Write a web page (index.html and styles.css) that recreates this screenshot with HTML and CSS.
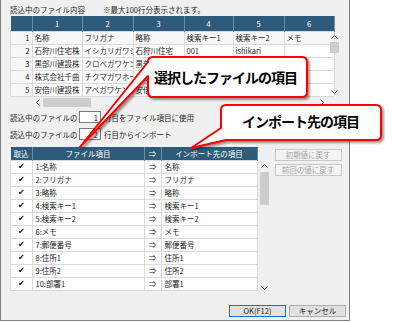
FILE: index.html
```html
<!DOCTYPE html>
<html lang="ja">
<head>
  <meta charset="UTF-8" />
  <title>ファイル取込設定</title>
  <link rel="stylesheet" href="styles.css">
</head>
<body>
<div class="dialog">
  <div class="caption-row">
    <span class="caption">読込中のファイル内容</span>
    <span>※最大100行分表示されます。</span>
  </div>

  <div class="preview">
    <div class="sheet">
      <table class="grid preview-grid">
        <thead>
          <tr>
            <th class="w21"></th><th class="w49">1</th><th class="w50">2</th><th class="w50">3</th>
            <th class="w48">4</th><th class="w50">5</th><th class="w49">6</th>
          </tr>
        </thead>
        <tbody>
          <tr class="first"><td class="no">1</td><td>名称</td><td>フリガナ</td><td>略称</td><td>検索キー1</td><td>検索キー2</td><td>メモ</td></tr>
          <tr><td class="no">2</td><td>石狩川住宅株</td><td>イシカリガワジュ</td><td>石狩川住宅</td><td>001</td><td>ishikari</td><td></td></tr>
          <tr><td class="no">3</td><td>黒部川建設株</td><td>クロベガワケンセ</td><td>黒部川建設</td><td>002</td><td>kurobe</td><td></td></tr>
          <tr><td class="no">4</td><td>株式会社千曲</td><td>チクマガワホーム</td><td>千曲川ホーム</td><td>003</td><td>chikuma</td><td></td></tr>
          <tr><td class="no">5</td><td>安倍川建設株</td><td>アベガワケンセツ</td><td>安倍川建設</td><td>004</td><td>abe</td><td></td></tr>
        </tbody>
      </table>
      <div class="hscroll">
        <span class="arrow"><svg width="4" height="7" viewBox="0 0 4 7"><path d="M3.5 0.5 L0.5 3.5 L3.5 6.5" fill="none" stroke="#444"/></svg></span>
        <span class="thumb-h"></span>
        <span class="track"></span>
        <span class="arrow"><svg width="4" height="7" viewBox="0 0 4 7"><path d="M0.5 0.5 L3.5 3.5 L0.5 6.5" fill="none" stroke="#444"/></svg></span>
      </div>
    </div>
    <div class="vscroll vscroll-top">
      <span class="arrow"><svg width="7" height="4" viewBox="0 0 7 4"><path d="M0.5 3.5 L3.5 0.5 L6.5 3.5" fill="none" stroke="#444"/></svg></span>
      <span class="thumb-v short"></span>
      <span class="track"></span>
      <span class="arrow"><svg width="7" height="4" viewBox="0 0 7 4"><path d="M0.5 0.5 L3.5 3.5 L6.5 0.5" fill="none" stroke="#444"/></svg></span>
    </div>
  </div>

  <div class="settings">
    <div class="setting">
      <span class="label">読込中のファイルの</span>
      <input class="num" type="text" value="1">
      <span class="after">行目をファイル項目に使用</span>
    </div>
    <div class="setting">
      <span class="label">読込中のファイルの</span>
      <input class="num" type="text" value="2">
      <span class="after">行目からインポート</span>
    </div>
  </div>

  <div class="mapping">
    <table class="grid mapping-grid">
      <thead>
        <tr><th class="w21">取込</th><th class="w111">ファイル項目</th><th class="w16">⇒</th><th class="w95">インポート先の項目</th></tr>
      </thead>
      <tbody>
        <tr><td class="check">✔</td><td>1:名称</td><td class="to">⇒</td><td>名称</td></tr>
        <tr><td class="check">✔</td><td>2:フリガナ</td><td class="to">⇒</td><td>フリガナ</td></tr>
        <tr><td class="check">✔</td><td>3:略称</td><td class="to">⇒</td><td>略称</td></tr>
        <tr><td class="check">✔</td><td>4:検索キー1</td><td class="to">⇒</td><td>検索キー1</td></tr>
        <tr><td class="check">✔</td><td>5:検索キー2</td><td class="to">⇒</td><td>検索キー2</td></tr>
        <tr><td class="check">✔</td><td>6:メモ</td><td class="to">⇒</td><td>メモ</td></tr>
        <tr><td class="check">✔</td><td>7:郵便番号</td><td class="to">⇒</td><td>郵便番号</td></tr>
        <tr><td class="check">✔</td><td>8:住所1</td><td class="to">⇒</td><td>住所1</td></tr>
        <tr><td class="check">✔</td><td>9:住所2</td><td class="to">⇒</td><td>住所2</td></tr>
        <tr><td class="check">✔</td><td>10:部署1</td><td class="to">⇒</td><td>部署1</td></tr>
      </tbody>
    </table>
    <div class="vscroll vscroll-low">
      <span class="arrow"><svg width="7" height="4" viewBox="0 0 7 4"><path d="M0.5 3.5 L3.5 0.5 L6.5 3.5" fill="none" stroke="#444"/></svg></span>
      <span class="thumb-v long"></span>
      <span class="track"></span>
      <span class="arrow"><svg width="7" height="4" viewBox="0 0 7 4"><path d="M0.5 0.5 L3.5 3.5 L6.5 0.5" fill="none" stroke="#444"/></svg></span>
    </div>
    <div class="side">
      <button class="side-button" disabled>初期値に戻す</button>
      <button class="side-button" disabled>前回の値に戻す</button>
    </div>
  </div>

  <div class="footer">
    <button class="dlg-button primary">OK(F12)</button>
    <button class="dlg-button">キャンセル</button>
  </div>
</div>

<svg class="callouts" width="393" height="322" viewBox="0 0 393 322">
  <path class="callout" d="M153 57 H302 Q307 57 307 62 V92 Q307 97 302 97 H153 Q148 97 148 92 V76 L80 147 L148 62 Q148 57 153 57 Z"/>
  <text class="callout-text" x="154" y="83">選択したファイルの項目</text>
  <path class="callout" d="M226 105 H376 Q381 105 381 110 V135 Q381 140 376 140 H226 L191 148 L221 128 V110 Q221 105 226 105 Z"/>
  <text class="callout-text" x="242" y="127">インポート先の項目</text>
</svg>
</body>
</html>
```

FILE: styles.css
```css
body {
  margin: 0;
  background: #fff;
  font-family: "Noto Sans CJK JP", sans-serif;
  font-size: 7.5px;
  color: #1e1e1e;
  position: relative;
}
.dialog {
  width: 350px;
  height: 321px;
  box-sizing: border-box;
  border: 1px solid #808080;
  border-top: 0;
  background: #f0f0f0;
  padding: 0 3px 0 9px;
  display: flex;
  flex-direction: column;
}
.caption-row {
  height: 16px;
  box-sizing: border-box;
  padding-top: 4px;
  line-height: 12px;
  display: flex;
  white-space: nowrap;
}
.caption {
  width: 93px;
}

/* grids */
.grid {
  border-collapse: collapse;
  table-layout: fixed;
}
.grid th {
  background: #2f5b7a;
  color: #fff;
  font-weight: normal;
  padding: 0;
  text-align: center;
  border-right: 1px solid #6d8ca4;
  line-height: 12px;
  white-space: nowrap;
  overflow: hidden;
}
.grid td {
  height: 12px;
  padding: 0 0 0 2px;
  border: 1px solid #dadada;
  background: #fff;
  white-space: nowrap;
  overflow: hidden;
  line-height: 12px;
}
.w16 { width: 16px; }
.w21 { width: 21px; }
.w48 { width: 48px; }
.w49 { width: 49px; }
.w50 { width: 50px; }
.w95 { width: 95px; }
.w111 { width: 111px; }

.preview {
  display: flex;
  height: 92px;
}
.sheet {
  width: 317px;
  display: flex;
  flex-direction: column;
}
.preview-grid {
  width: 317px;
}
.preview-grid th {
  height: 15px;
}
.preview-grid .first td {
  background: #f7f7f7;
}
.preview-grid td.no {
  text-align: right;
  padding: 0 2px 0 0;
  background: #f7f7f7;
}
.hscroll {
  height: 11px;
  margin-top: auto;
  padding-left: 23px;
  display: flex;
  align-items: center;
}
.hscroll .arrow {
  width: 10px;
  display: flex;
  justify-content: center;
}
.thumb-h {
  width: 48px;
  height: 9px;
  background: #cdcdcd;
}
.track {
  flex: 1;
}
.vscroll {
  display: flex;
  flex-direction: column;
  align-items: center;
}
.vscroll .arrow {
  height: 11px;
  display: flex;
  align-items: center;
}
.thumb-v {
  width: 9px;
  background: #cdcdcd;
}
.thumb-v.short { height: 11px; }
.thumb-v.long { height: 33px; }
.vscroll-top {
  width: 14px;
  margin-top: 15px;
  height: 66px;
}

/* settings */
.settings {
  margin-top: 3px;
  display: flex;
  flex-direction: column;
  gap: 5px;
}
.setting {
  height: 12px;
  display: flex;
  align-items: center;
  white-space: nowrap;
}
.setting .label {
  width: 69px;
  flex: none;
}
.num {
  width: 22px;
  height: 12px;
  flex: none;
  box-sizing: border-box;
  margin: 0;
  border: 1px solid #7a7a7a;
  background: #fff;
  font: inherit;
  color: inherit;
  text-align: right;
  padding: 0 2px 0 0;
  line-height: 10px;
}
.setting .after {
  margin-left: 3px;
}

/* mapping */
.mapping {
  margin-top: 7px;
  height: 146px;
  display: flex;
}
.mapping-grid {
  width: 243px;
  align-self: flex-start;
}
.mapping-grid th {
  height: 13px;
}
.mapping-grid td {
  padding-left: 3px;
}
.mapping-grid td.check {
  padding: 0;
  text-align: center;
  font-family: "DejaVu Sans", sans-serif;
  font-size: 8px;
  color: #111;
}
.mapping-grid td.to {
  padding: 0;
  text-align: center;
}
.vscroll-low {
  width: 12px;
  margin-left: 1px;
  margin-top: 13px;
}
.vscroll-low .arrow:first-child {
  height: 12px;
}
.side {
  width: 67px;
  margin-left: 4px;
  padding-top: 2px;
  display: flex;
  flex-direction: column;
  gap: 3px;
}
.side-button {
  height: 12px;
  padding: 0;
  font: inherit;
  line-height: 10px;
  color: #a3a3a3;
  background: #f4f4f4;
  border: 1px solid #c8c8c8;
}

/* footer */
.footer {
  margin-top: 12px;
  display: flex;
  justify-content: flex-end;
  gap: 3px;
}
.dlg-button {
  width: 57px;
  height: 12px;
  padding: 0;
  font: inherit;
  line-height: 10px;
  color: #1e1e1e;
  background: #e1e1e1;
  border: 1px solid #adadad;
}
.dlg-button.primary {
  border-color: #0078d7;
}

/* callouts */
.callouts {
  position: absolute;
  left: 0;
  top: 0;
  pointer-events: none;
}
.callout {
  fill: #fff;
  stroke: #f00;
  stroke-width: 2;
  stroke-linejoin: round;
  filter: drop-shadow(2px 2px 1px rgba(0, 0, 0, 0.4));
}
.callout-text {
  font-family: "Noto Sans CJK JP", sans-serif;
  font-weight: bold;
  font-size: 14px;
  letter-spacing: -1px;
  fill: #000;
}
```
